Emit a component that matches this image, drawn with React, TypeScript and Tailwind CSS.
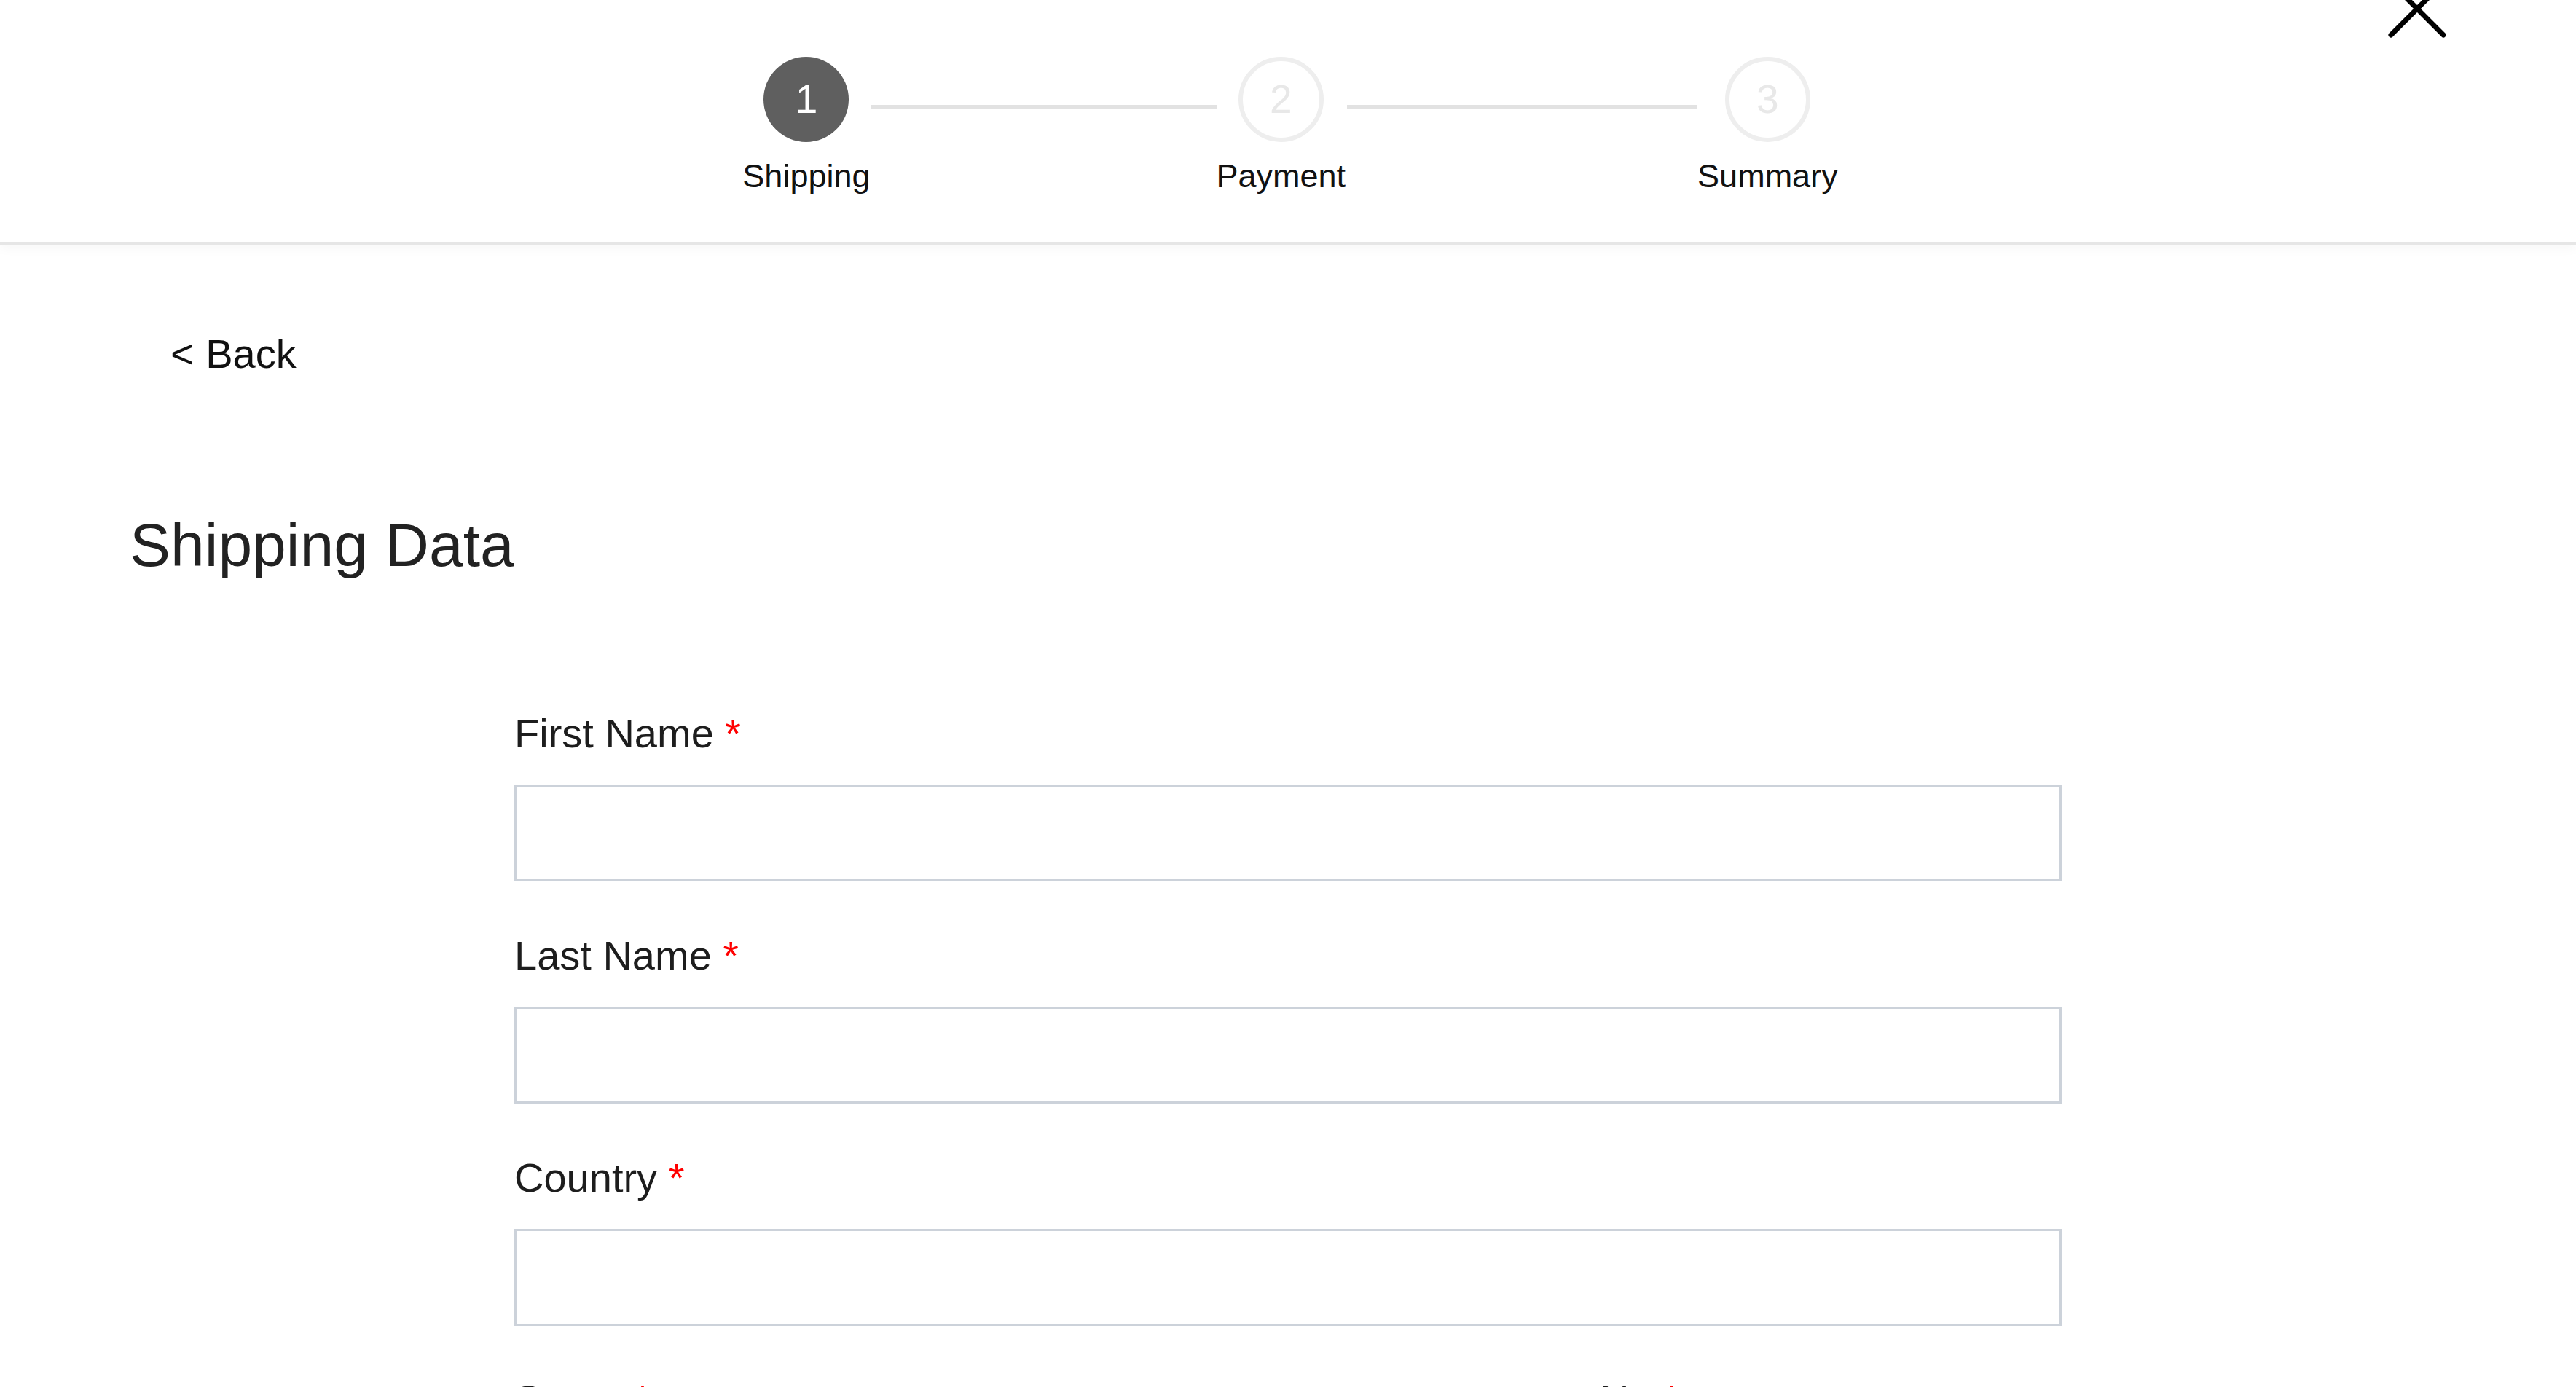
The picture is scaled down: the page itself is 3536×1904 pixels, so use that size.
import React from "react";

const font = "font-['Liberation_Sans',Arial,sans-serif]";

const steps = [
  { n: 1, label: "Shipping", active: true },
  { n: 2, label: "Payment", active: false },
  { n: 3, label: "Summary", active: false },
];

function Step({ n, label, active }: { n: number; label: string; active: boolean }) {
  return (
    <div className="flex flex-col items-center">
      <div
        className={[
          "flex h-[117px] w-[117px] items-center justify-center rounded-full text-[55px] leading-none",
          active
            ? "bg-[#5f5f5f] text-white"
            : "border-[6px] border-[#eeeeee] bg-white text-[#e8e8e8]",
        ].join(" ")}
      >
        {n}
      </div>
      <div className="mt-[24px] text-[45px] leading-none text-[#111111]">{label}</div>
    </div>
  );
}

function Field({ label, className = "" }: { label: string; className?: string }) {
  return (
    <div className={className}>
      <label className="block text-[56px] leading-none text-[#1d1d1d]">
        {label} <span className="text-[#ff0000]">*</span>
      </label>
      <input
        type="text"
        className="mt-[42px] block h-[133px] w-full border-[3px] border-[#ccd2da] bg-white px-6 text-[50px] outline-none"
      />
    </div>
  );
}

export default function App() {
  return (
    <div className={`min-h-screen bg-white ${font}`}>
      {/* Header / stepper */}
      <header className="relative border-b-4 border-[#e6e6e6] bg-white pb-[68px] pt-[78px] shadow-[0_6px_14px_rgba(0,0,0,0.03)]">
        <div className="flex items-start justify-center pl-[6px]">
          <Step {...steps[0]} />
          <div className="mt-[66px] h-[5px] w-[475px] bg-[#e2e2e2]" />
          <Step {...steps[1]} />
          <div className="mt-[66px] ml-[2px] h-[5px] w-[481px] bg-[#e2e2e2]" />
          <Step {...steps[2]} />
        </div>

        <button
          type="button"
          aria-label="Close"
          className="absolute left-[3278px] top-[-28px] h-[80px] w-[80px]"
        >
          <svg viewBox="0 0 80 80" width="80" height="80">
            <path d="M4 4 L76 76 M4 76 L76 4" stroke="#000" strokeWidth="7" strokeLinecap="round" />
          </svg>
        </button>
      </header>

      {/* Main */}
      <main className="pt-[122px]">
        <div className="pl-[234px] text-[56px] leading-none text-[#111111]">&lt; Back</div>

        <h1 className="mt-[192px] pl-[178px] text-[84px] font-normal leading-none text-[#222222]">
          Shipping Data
        </h1>

        <form className="mx-auto mt-[189px] flex w-[2124px] flex-col gap-[74px]">
          <Field label="First Name" />
          <Field label="Last Name" />
          <Field label="Country" />
          <div className="grid grid-cols-[1fr_634px] gap-x-[74px]">
            <Field label="Street" />
            <Field label="Nr." />
          </div>
        </form>
      </main>
    </div>
  );
}
